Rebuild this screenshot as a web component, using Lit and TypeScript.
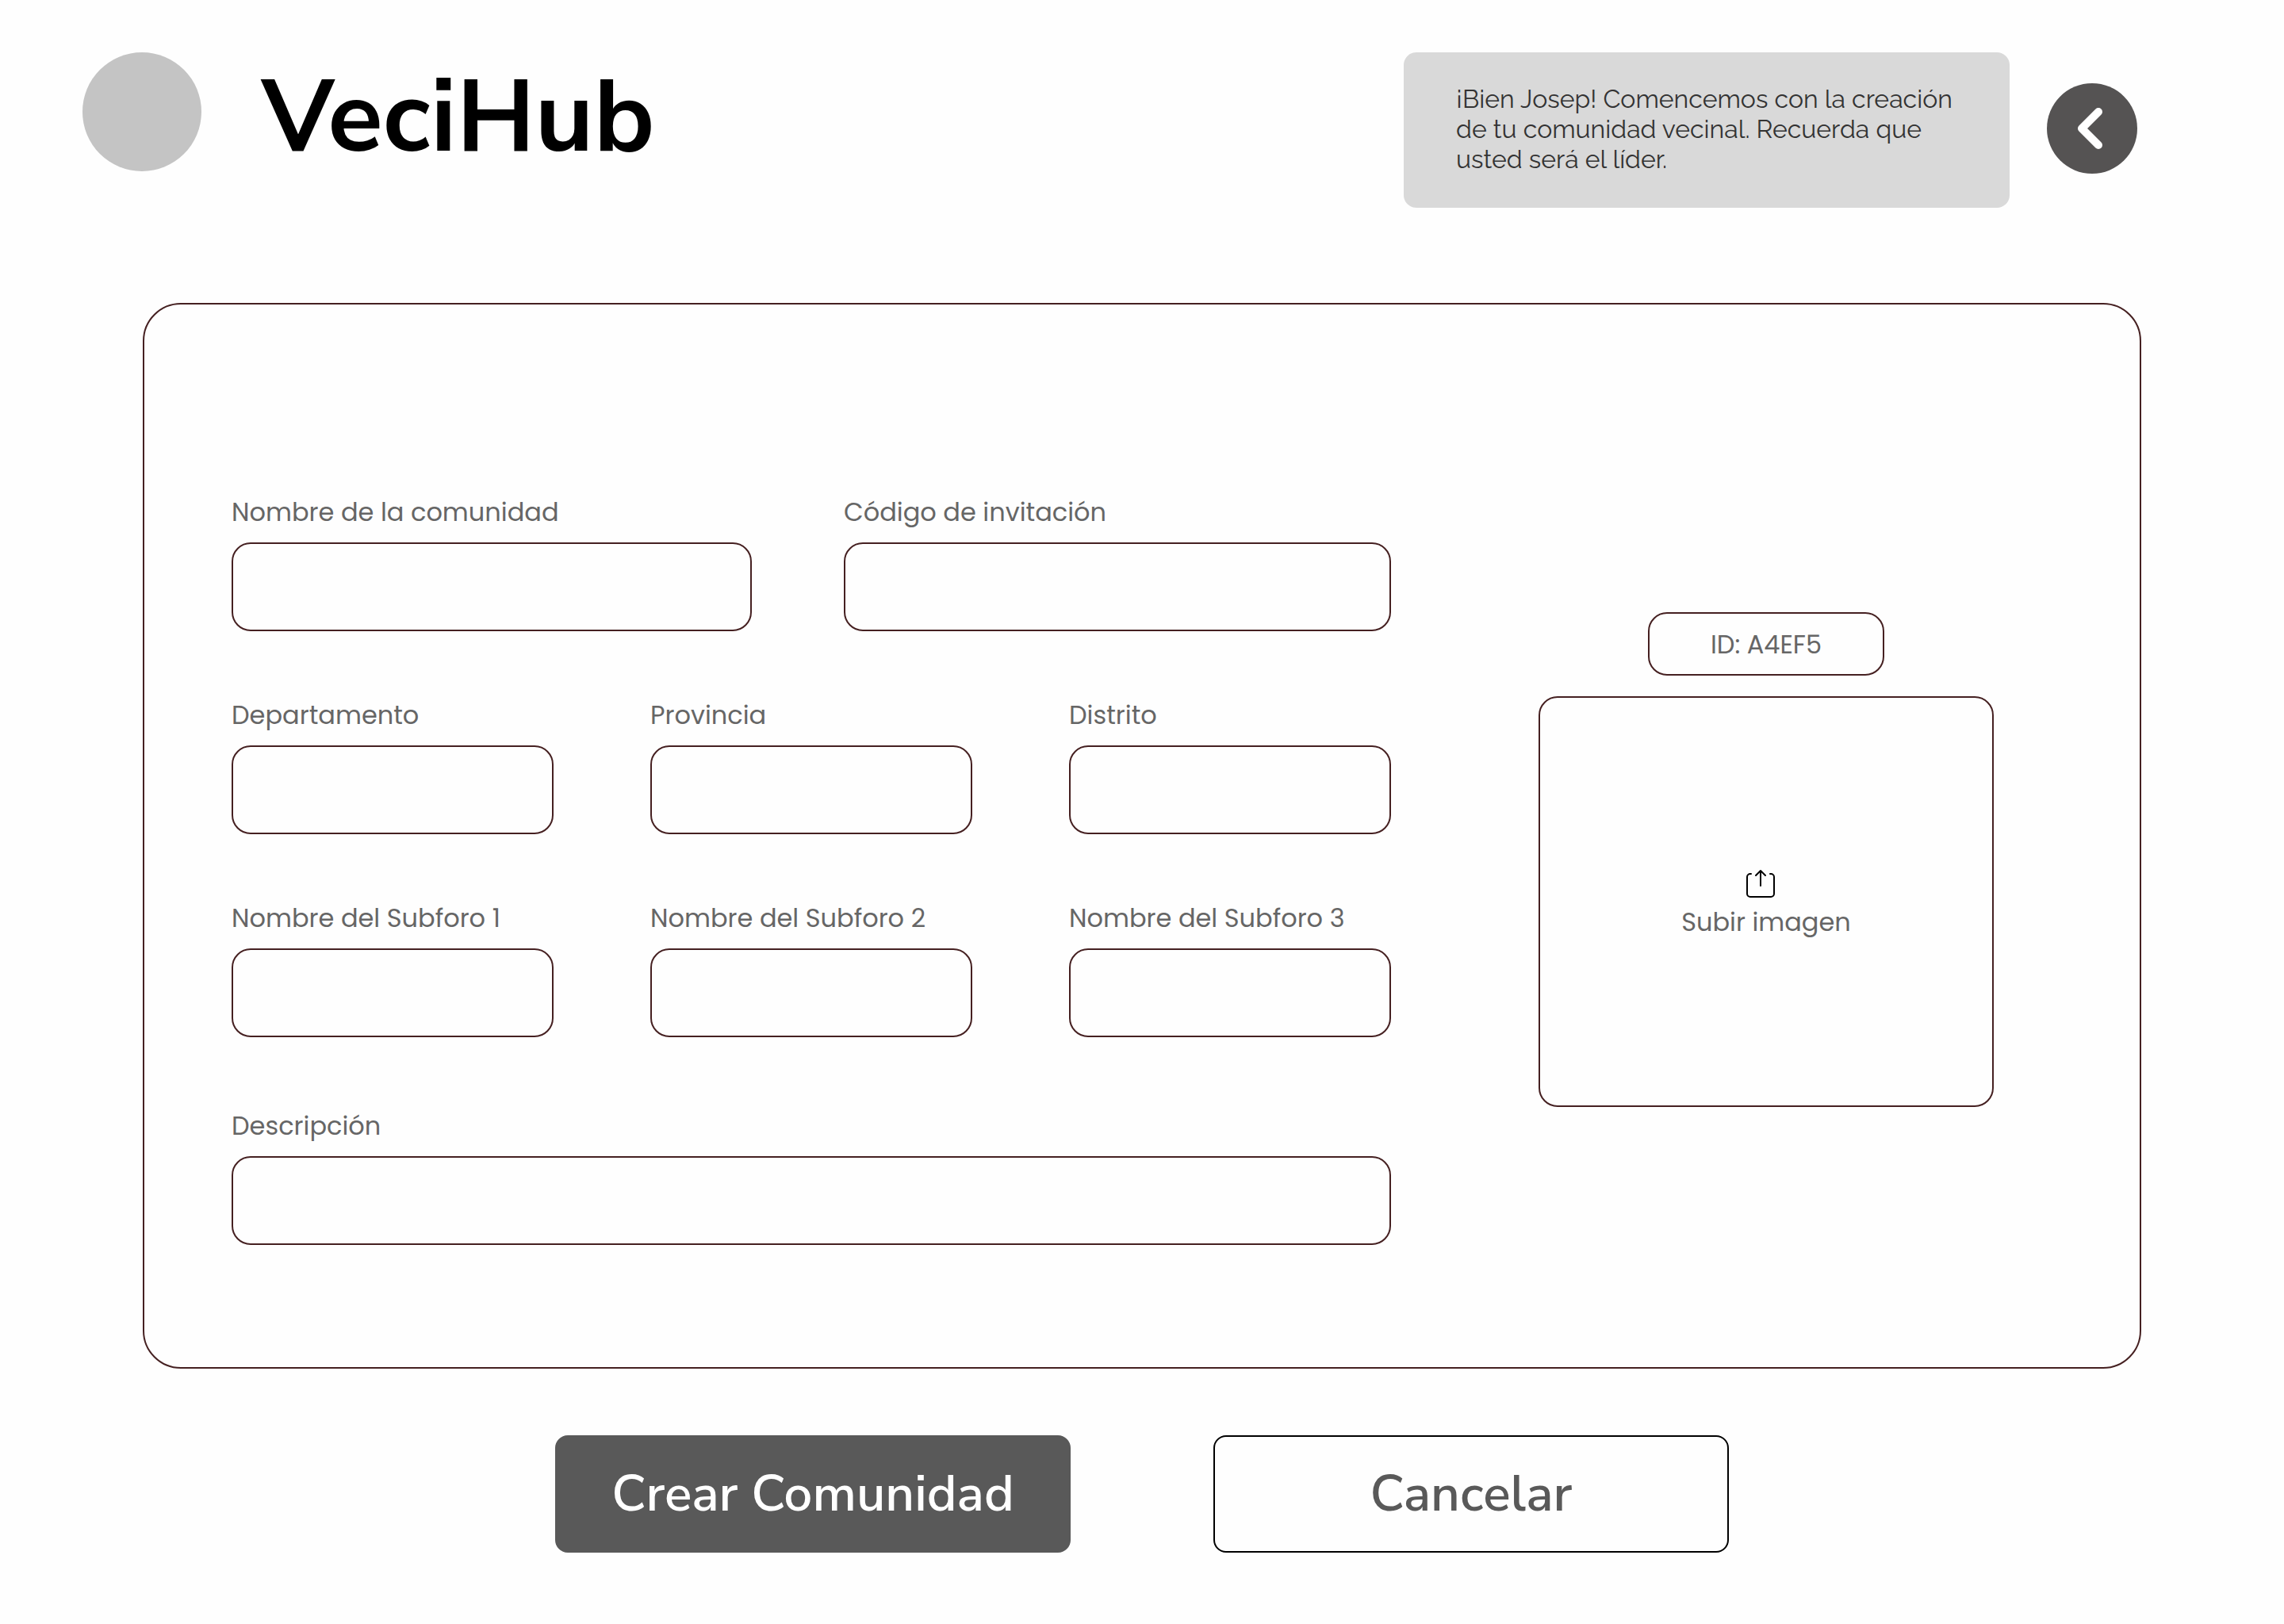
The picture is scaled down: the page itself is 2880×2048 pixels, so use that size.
import { LitElement, html, css } from "lit";

interface Field {
  id: string;
  label: string;
}

const REGION_FIELDS: Field[] = [
  { id: "departamento", label: "Departamento" },
  { id: "provincia", label: "Provincia" },
  { id: "distrito", label: "Distrito" },
];

const SUBFORUM_FIELDS: Field[] = [
  { id: "subforo-1", label: "Nombre del Subforo 1" },
  { id: "subforo-2", label: "Nombre del Subforo 2" },
  { id: "subforo-3", label: "Nombre del Subforo 3" },
];

class AppRoot extends LitElement {
  static styles = css`
    :host {
      display: block;
      min-height: 100vh;
      box-sizing: border-box;
      padding: 66px 180px 90px;
      background: #fefefe;
      color: #666666;
      font-family: Poppins, "Noto Sans", sans-serif;
      font-size: 32px;
      line-height: 48px;
    }

    * {
      box-sizing: border-box;
    }

    .header {
      display: flex;
      align-items: flex-start;
      margin: 0 5px 0 -76px;
    }

    .avatar {
      flex: none;
      width: 150px;
      height: 150px;
      border-radius: 50%;
      background: #c4c4c4;
    }

    .brand {
      margin: 0 auto 0 76px;
      color: #000000;
      font-family: "Nunito Sans", Nunito, "Open Sans", sans-serif;
      font-size: 128px;
      font-weight: 700;
      line-height: 164px;
    }

    .message {
      width: 764px;
      margin: 0 47px 0 0;
      padding: 40px 66px 42px;
      border-radius: 16px;
      background: #d9d9d9;
      color: #333333;
      font-family: Raleway, Lato, sans-serif;
      line-height: 38px;
    }

    .back {
      display: grid;
      place-items: center;
      flex: none;
      width: 114px;
      height: 114px;
      margin-top: 39px;
      padding: 0;
      border: 0;
      border-radius: 50%;
      background: #555353;
      cursor: pointer;
    }

    .back-icon {
      width: 114px;
      height: 114px;
    }

    .card {
      display: grid;
      grid-template-columns: minmax(0, 1462fr) minmax(0, 574fr);
      column-gap: 186px;
      align-items: start;
      margin-top: 120px;
      padding: 238px 184px 154px 110px;
      border: 2px solid #452021;
      border-radius: 48px;
    }

    .fields {
      display: grid;
      row-gap: 82px;
    }

    .row {
      display: grid;
      grid-template-columns: repeat(3, minmax(0, 1fr));
      column-gap: 122px;
    }

    .row-main {
      grid-template-columns: minmax(0, 656fr) minmax(0, 690fr);
      column-gap: 116px;
    }

    .row-wide {
      grid-template-columns: minmax(0, 1fr);
      margin-top: 6px;
    }

    .field {
      display: grid;
      row-gap: 14px;
    }

    .input {
      width: 100%;
      height: 112px;
      padding: 0 32px;
      border: 2px solid #452021;
      border-radius: 24px;
      background: transparent;
      color: inherit;
      font: inherit;
    }

    .media {
      display: grid;
      justify-items: center;
      row-gap: 26px;
      padding-top: 150px;
    }

    .code {
      display: grid;
      place-items: center;
      width: 298px;
      height: 80px;
      padding-top: 2px;
      border: 2px solid #452021;
      border-radius: 24px;
    }

    .upload {
      display: flex;
      flex-direction: column;
      align-items: center;
      justify-content: center;
      gap: 4px;
      width: 100%;
      height: 518px;
      padding: 8px 0 0;
      border: 2px solid #452021;
      border-radius: 24px;
      background: transparent;
      color: inherit;
      font: inherit;
      cursor: pointer;
    }

    .upload-icon {
      width: 50px;
      height: 40px;
    }

    .actions {
      display: flex;
      justify-content: center;
      gap: 180px;
      margin-top: 84px;
    }

    .action {
      width: 650px;
      height: 148px;
      padding: 0;
      border: 2px solid #595959;
      border-radius: 16px;
      background: #595959;
      color: #ffffff;
      font-family: "Nunito Sans", Nunito, "Open Sans", sans-serif;
      font-size: 64px;
      font-weight: 600;
      line-height: 88px;
      cursor: pointer;
    }

    .action-outline {
      border-color: #000000;
      background: transparent;
      color: #595959;
    }
  `;

  private field({ id, label }: Field) {
    return html`
      <div class="field">
        <label for=${id}>${label}</label>
        <input class="input" id=${id} name=${id} type="text" autocomplete="off" />
      </div>
    `;
  }

  render() {
    return html`
      <header class="header">
        <div class="avatar"></div>
        <h1 class="brand">VeciHub</h1>
        <p class="message">
          ¡Bien Josep! Comencemos con la creación de tu comunidad vecinal. Recuerda que usted será el líder.
        </p>
        <button class="back" type="button" aria-label="Volver">
          <svg class="back-icon" viewBox="0 0 114 114" fill="none" aria-hidden="true">
            <path d="M65 36 44 57l21 21" stroke="#fff" stroke-width="10" stroke-linecap="round" stroke-linejoin="round" />
          </svg>
        </button>
      </header>

      <form id="community" class="card" @submit=${(e: Event) => e.preventDefault()}>
        <div class="fields">
          <div class="row row-main">
            ${this.field({ id: "nombre", label: "Nombre de la comunidad" })}
            ${this.field({ id: "codigo", label: "Código de invitación" })}
          </div>
          <div class="row">${REGION_FIELDS.map((f) => this.field(f))}</div>
          <div class="row">${SUBFORUM_FIELDS.map((f) => this.field(f))}</div>
          <div class="row row-wide">${this.field({ id: "descripcion", label: "Descripción" })}</div>
        </div>
        <div class="media">
          <div class="code">ID: A4EF5</div>
          <button class="upload" type="button">
            <svg class="upload-icon" viewBox="0 0 50 40" fill="none" stroke="#000" stroke-width="2" stroke-linecap="round" stroke-linejoin="round" aria-hidden="true">
              <path d="M6 7H5a4 4 0 0 0-4 4v21a4 4 0 0 0 4 4h26a4 4 0 0 0 4-4V11a4 4 0 0 0-4-4h-1" />
              <path d="M18 22V3M12 9l6-6 6 6" />
            </svg>
            <span>Subir imagen</span>
          </button>
        </div>
      </form>

      <div class="actions">
        <button class="action" type="submit" form="community">Crear Comunidad</button>
        <button class="action action-outline" type="button">Cancelar</button>
      </div>
    `;
  }
}

customElements.define("app-root", AppRoot);
